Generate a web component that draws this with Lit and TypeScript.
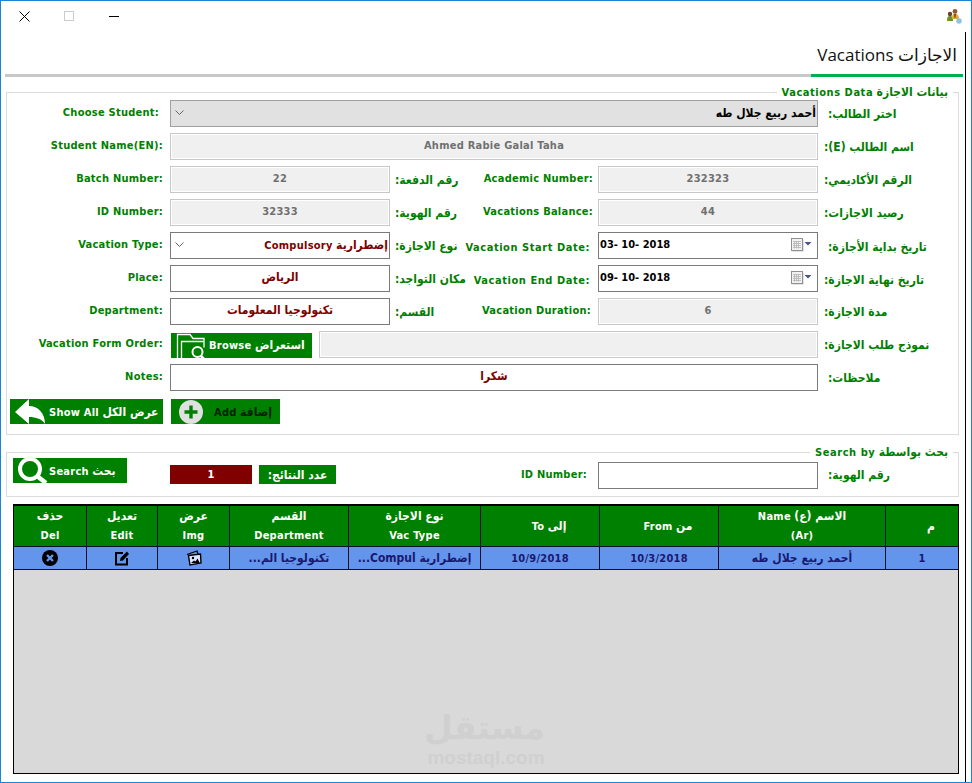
import { LitElement, html, css } from "lit";
import { customElement } from "lit/decorators.js";

const chevron = html`<svg class="chev" width="9" height="6" viewBox="0 0 9 6"><path d="M.5.5 4.5 4.5 8.5.5" fill="none" stroke="#666" stroke-width="1"/></svg>`;
const calendar = html`<svg class="cal" width="21" height="14" viewBox="0 0 21 14">
  <rect x="1.500" y="1.500" width="11" height="12" fill="#c8c8c8"/>
  <rect x="0.500" y="0.500" width="11" height="12" fill="#f2f2f2" stroke="#8f8f8f"/>
  <path d="M2 3.500h8M2 5.500h8M2 7.500h8M2 9.500h8M3.500 3v7.500M5.500 3v7.500M7.500 3v7.500" stroke="#b4b4b4" stroke-width=".8"/>
  <path d="M13.500 4h7l-3.500 3.500z" fill="#505088"/></svg>`;

@customElement("app-root")
export class AppRoot extends LitElement {
  static styles = css`
    :host { display: block; width: 972px; height: 783px; overflow: hidden; }
    * { box-sizing: border-box; }
    .win { width: 972px; height: 783px; border: 1px solid #1a86d8; background: #fff; display: flex; flex-direction: column;
      font: bold 11px "DejaVu Sans Condensed", "DejaVu Sans", sans-serif; color: #008000; }
    .titlebar { height: 31px; display: flex; align-items: center; flex: none; padding: 0 8px 1px 18px; }
    .titlebar .tb { width: 45px; display: flex; }
    .titlebar .app { margin-left: auto; }
    .body { flex: 1; width: 965px; border-right: 1px solid #000; display: flex; flex-direction: column; }
    .tabs { height: 45px; display: flex; padding-left: 4px; padding-right: 2px; flex: none; }
    .tabfill { flex: 1; border-bottom: 3px solid #c8c8c8; }
    .tab { width: 152px; border-bottom: 3px solid #00b050; font: 17px "Open Sans", "DejaVu Sans", sans-serif; color: #111; display: flex;
      align-items: center; padding: 2px 6px 0 0; white-space: nowrap; direction: rtl; justify-content: flex-start; }
    .fs { position: relative; margin-left: 5px; width: 953px; border: 1px solid #dcdcdc; flex: none; }
    .fs.one { margin-top: 15px; padding: 7px 0 10px; }
    .fs.two { margin-top: 17px; height: 45px; }
    .legend { position: absolute; top: -8px; right: 5px; background: #fff; padding: 0 5px; height: 15px; line-height: 15px; white-space: nowrap; }
    .legend .en { letter-spacing: .55px; }
    .grid { display: grid; grid-template-columns: 163px 220px 208px 220px 1fr; grid-auto-rows: 27px; row-gap: 6px; }
    .en { letter-spacing: .25px; direction: ltr; unicode-bidi: isolate; }
    .ar { font-size: 12px; letter-spacing: 0; direction: rtl; unicode-bidi: isolate; }
    .mix { direction: rtl; unicode-bidi: isolate; display: inline-block; }
    .l { align-self: center; text-align: right; padding: 0 7px 3px 0; white-space: nowrap; }
    .l.choose { padding-right: 11px; }
    .mid { display: flex; justify-content: space-between; align-items: center; padding: 0 5px; white-space: nowrap; }
    .mid .m2 { padding-bottom: 3px; }
    .mid .m2.d { margin-right: 2px; }
    .mid .low { padding-top: 3px; margin-right: 3px; letter-spacing: .55px; }
    .r { align-self: center; padding-left: 6px; white-space: nowrap; direction: rtl; display: flex; justify-content: flex-end; }
    .r.p { padding-left: 10px; }
    .r.low { padding-top: 2px; }
    .box { display: flex; align-items: center; justify-content: center; height: 27px; padding-bottom: 3px; white-space: nowrap; min-width: 0; }
    .span3 { grid-column: span 3; }
    .dis { border: 1px solid #c8c8c8; box-shadow: inset 0 0 0 1px #fff; background: #f0f0f0; color: #707070; }
    .inp { border: 1px solid #7a7a7a; color: #800000; background: #fff; }
    .combo { justify-content: space-between; padding: 0 1px 1px 4px; }
    .combo.grey { background: #e1e1e1; border-color: #a0a0a0; color: #000; }
    .date { justify-content: space-between; color: #000; padding: 0 5px 3px 1px; letter-spacing: 0; }
    .cal { margin-top: 1px; }
    .btn { display: flex; align-items: center; background: #008000; color: #fff; height: 25px; white-space: nowrap; overflow: hidden; }
    .browse { width: 141px; margin-left: 1px; align-self: center; margin-top: 1px; padding-left: 4px; gap: 0; }
    .fileline { display: grid; grid-column: 2 / span 3; grid-template-columns: 149px 1fr; }
    .actions { display: flex; gap: 8px; margin: 8px 0 0 3px; }
    .showall { width: 153px; padding-left: 5px; gap: 3px; }
    .add { width: 109px; padding-left: 8px; gap: 11px; color: #002000; }
    .search { width: 114px; margin: 5px 0 0 6px; padding-left: 4px; gap: 0; }
    .cnt { display: flex; gap: 7px; margin-top: 12px; }
    .val, .count { height: 19px; display: flex; align-items: center; justify-content: center; color: #fff; }
    .val { width: 82px; background: #800000; }
    .count { width: 77px; background: #008000; }
    .g2 { grid-auto-rows: 43px; }
    .g2 .mid { justify-content: flex-end; padding-right: 11px; }
    .g2 .inp { margin-top: 9px; }
    .table { position: relative; margin: 7px 0 0 12px; width: 946px; height: 270px; border: 1px solid #000; border-top-width: 2px; background: #d9d9d9; flex: none; overflow: hidden; }
    .row { direction: rtl; display: grid; grid-template-columns: 73px 167px 119px 119px 132px 119px 72px 71px 72px; border-bottom: 1px solid #0a1030; }
    .row > div { display: flex; align-items: center; justify-content: center; border-left: 1px solid #0a1030; text-align: center; white-space: nowrap; }
    .row > div:last-child { border-left: 0; }
    .head { height: 41px; background: #008000; color: #fff; line-height: 19px; }
    .head > div { flex-direction: column; }
    .head > div.off { padding-left: 18px; }
    .data { height: 23px; background: #6495ed; color: #191970; }
    .mark { position: absolute; left: 413px; top: 202px; width: 118px; text-align: center; color: #d0d0d0; pointer-events: none; white-space: nowrap; }
    .mark .m1 { font: bold 33px/40px "DejaVu Sans", sans-serif; direction: rtl; }
    .mark .m2 { font: bold 19px/20px "Liberation Sans", sans-serif; }
  `;

  render() {
    return html`<div class="win">
      <div class="titlebar">
        <div class="tb"><svg width="11" height="11" viewBox="0 0 11 11"><path d="M.5.5l10 10M10.500.5l-10 10" stroke="#000" stroke-width="1"/></svg></div>
        <div class="tb"><svg width="10" height="10" viewBox="0 0 10 10"><rect x=".5" y=".5" width="9" height="9" fill="none" stroke="#ccc"/></svg></div>
        <div class="tb"><svg width="11" height="3" viewBox="0 0 11 3"><path d="M0 1.500h10" stroke="#000"/></svg></div>
        <svg class="app" width="17" height="17" viewBox="0 0 17 17">
          <circle cx="4" cy="6" r="2.200" fill="#6a4028"/><path d="M1 13c0-4 1-5 3-5s3 1 3 5z" fill="#6f8f2a"/>
          <circle cx="9" cy="3.500" r="2.400" fill="#8a5a3a"/><path d="M6 11c0-4 1-5.500 3-5.500s4 1.500 4 5.500z" fill="#d8b030"/>
          <path d="M8 6h2l-.5 4h-1z" fill="#a03030"/>
          <circle cx="13" cy="13" r="2.800" fill="#8fc0ee"/>
        </svg>
      </div>
      <div class="body">
        <div class="tabs"><div class="tabfill"></div><div class="tab"><span>الاجازات Vacations</span></div></div>

        <div class="fs one">
          <div class="legend"><span class="mix"><span class="ar">بيانات الاجازة</span> <span class="en">Vacations Data</span></span></div>
          <div class="grid">
            <div class="l en choose">Choose Student:</div>
            <div class="box inp combo grey span3">${chevron}<span class="ar">أحمد ربيع جلال طه</span></div>
            <div class="r p ar"><span>اختر الطالب:</span></div>

            <div class="l en">Student Name(EN):</div>
            <div class="box dis span3 en">Ahmed Rabie Galal Taha</div>
            <div class="r ar"><span>اسم الطالب (E):</span></div>

            <div class="l en">Batch Number:</div>
            <div class="box dis en">22</div>
            <div class="mid"><span class="ar">رقم الدفعة:</span><span class="en m2">Academic Number:</span></div>
            <div class="box dis en">232323</div>
            <div class="r ar"><span>الرقم الأكاديمي:</span></div>

            <div class="l en">ID Number:</div>
            <div class="box dis en">32333</div>
            <div class="mid"><span class="ar">رقم الهوية:</span><span class="en m2">Vacations Balance:</span></div>
            <div class="box dis en">44</div>
            <div class="r ar"><span>رصيد الاجازات:</span></div>

            <div class="l en">Vacation Type:</div>
            <div class="box inp combo">${chevron}<span class="mix"><span class="ar">إضطرارية</span> <span class="en">Compulsory</span></span></div>
            <div class="mid"><span class="ar">نوع الاجازة:</span><span class="en low">Vacation Start Date:</span></div>
            <div class="box inp date en">03- 10- 2018${calendar}</div>
            <div class="r p low ar"><span>تاريخ بداية الأجازة:</span></div>

            <div class="l en">Place:</div>
            <div class="box inp ar">الرياض</div>
            <div class="mid"><span class="ar">مكان التواجد:</span><span class="en low">Vacation End Date:</span></div>
            <div class="box inp date en">09- 10- 2018${calendar}</div>
            <div class="r low ar"><span>تاريخ نهاية الاجازة:</span></div>

            <div class="l en">Department:</div>
            <div class="box inp ar">تكنولوجيا المعلومات</div>
            <div class="mid"><span class="ar">القسم:</span><span class="en m2 d">Vacation Duration:</span></div>
            <div class="box dis en">6</div>
            <div class="r ar"><span>مدة الاجازة:</span></div>

            <div class="l en">Vacation Form Order:</div>
            <div class="fileline">
              <div class="btn browse">
                <svg width="34" height="25" viewBox="0 0 34 25"><g fill="none" stroke="#fff"><path d="M2.500 25V1.500H15l3 4h11v9" stroke-width="1.300"/><path d="M6.500 25V8.500h22" stroke-width="1.300"/><circle cx="22.500" cy="19" r="5" stroke-width="2"/><path d="M26 23l4 4" stroke-width="2.500"/></g></svg>
                <span class="mix"><span class="ar">استعراض</span> <span class="en">Browse</span></span>
              </div>
              <div class="box dis"></div>
            </div>
            <div class="r ar"><span>نموذج طلب الاجازة:</span></div>

            <div class="l en">Notes:</div>
            <div class="box inp span3 ar">شكرا</div>
            <div class="r p ar"><span>ملاحظات:</span></div>
          </div>
          <div class="actions">
            <div class="btn showall">
              <svg width="31" height="25" viewBox="0 0 31 25"><path d="M0 13 14 0v7c9 0 16 7 16 18-3-5-9-7-16-7v7z" fill="#fff"/></svg>
              <span class="mix"><span class="ar">عرض الكل</span> <span class="en">Show All</span></span>
            </div>
            <div class="btn add">
              <svg width="24" height="24" viewBox="0 0 24 24"><circle cx="12" cy="12" r="12" fill="#e0e0e0"/><path d="M12 5.500v13M5.500 12h13" stroke="#008000" stroke-width="3.400"/></svg>
              <span class="mix"><span class="ar">إضافة</span> <span class="en">Add</span></span>
            </div>
          </div>
        </div>

        <div class="fs two">
          <div class="legend"><span class="mix"><span class="ar">بحث بواسطة</span> <span class="en">Search by</span></span></div>
          <div class="grid g2">
            <div><div class="btn search">
              <svg width="32" height="25" viewBox="0 0 32 25"><circle cx="13" cy="11" r="10" fill="none" stroke="#fff" stroke-width="4"/><path d="M20 18l9 7" stroke="#fff" stroke-width="4.500"/></svg>
              <span class="mix"><span class="ar">بحث</span> <span class="en">Search</span></span>
            </div></div>
            <div class="cnt"><div class="val en">1</div><div class="count ar">عدد النتائج:</div></div>
            <div class="mid"><span class="en">ID Number:</span></div>
            <div class="box inp"></div>
            <div class="r p ar"><span>رقم الهوية:</span></div>
          </div>
        </div>

        <div class="table">
          <div class="row head">
            <div class="ar off">م</div>
            <div><span class="mix"><span class="ar">الاسم (ع)</span> <span class="en">Name</span></span><span class="en">(Ar)</span></div>
            <div class="off"><span class="mix"><span class="ar">من</span> <span class="en">From</span></span></div>
            <div class="off"><span class="mix"><span class="ar">إلى</span> <span class="en">To</span></span></div>
            <div><span class="ar">نوع الاجازة</span><span class="en">Vac Type</span></div>
            <div><span class="ar">القسم</span><span class="en">Department</span></div>
            <div><span class="ar">عرض</span><span class="en">Img</span></div>
            <div><span class="ar">تعديل</span><span class="en">Edit</span></div>
            <div><span class="ar">حذف</span><span class="en">Del</span></div>
          </div>
          <div class="row data">
            <div class="en">1</div>
            <div class="ar">أحمد ربيع جلال طه</div>
            <div class="en">10/3/2018</div>
            <div class="en">10/9/2018</div>
            <div class="ar">إضطرارية Compul...</div>
            <div class="ar">تكنولوجيا الم...</div>
            <div><svg width="16" height="16" viewBox="0 0 16 16"><path d="M1 4.500 11 1l1 3" fill="none" stroke="#000" stroke-width="1.300"/><path d="M2.500 5.500 14.500 4l.5 9-11 2z" fill="#dfe8fb" stroke="#000" stroke-width="1.400"/><circle cx="7" cy="8" r="1.200" fill="#000"/><path d="M5 13l3-2.500 1.500 1 2-3 1.800 3.500.2 1z" fill="#000"/></svg></div>
            <div><svg width="16" height="16" viewBox="0 0 16 16"><path d="M9 3H2v11.500h11V8" fill="none" stroke="#000" stroke-width="2"/><path d="M6 11l.5-3L13 1.500 15 4l-6 6.500z" fill="#000"/></svg></div>
            <div><svg width="16" height="16" viewBox="0 0 16 16"><circle cx="8" cy="8" r="8" fill="#000"/><path d="M5 5l6 6M11 5l-6 6" stroke="#6495ed" stroke-width="2.400"/></svg></div>
          </div>
          <div class="mark"><div class="m1">مستقل</div><div class="m2">mostaql.com</div></div>
        </div>
      </div>
    </div>`;
  }
}
